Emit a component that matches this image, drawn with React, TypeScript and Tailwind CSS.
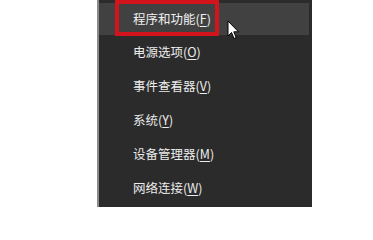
import React from 'react';

const items = [
  { label: '程序和功能', key: 'F' },
  { label: '电源选项', key: 'O' },
  { label: '事件查看器', key: 'V' },
  { label: '系统', key: 'Y' },
  { label: '设备管理器', key: 'M' },
  { label: '网络连接', key: 'W' },
];

export default function App() {
  return (
    <div
      className="relative flex w-[373px] h-[207px] overflow-hidden bg-white"
      style={{ fontFamily: '"Microsoft YaHei", "Noto Sans CJK SC", "Noto Sans", sans-serif' }}
    >
      <div className="w-[97px] shrink-0" />
      <div className="relative w-[215px] shrink-0 bg-[#2b2b2b] border-l-2 border-[#8a8a8a] pt-[3px]">
        {items.map((item, i) => (
          <div
            key={item.key}
            className={
              i === 0
                ? 'flex items-center h-8 mr-[3px] pl-[34px] bg-[#414141] text-[12.5px] text-[#f0f0f0]'
                : 'flex items-center h-[34px] pl-[34px] text-[12.5px] text-[#ececec]'
            }
          >
            {item.label}(<span className="underline underline-offset-2">{item.key}</span>)
          </div>
        ))}
        {/* red highlight annotation */}
        <div className="absolute left-[16px] top-0 w-[104px] h-[36px] border-4 border-[#d2151c]" />
      </div>
      <div className="flex-1" />
      {/* mouse pointer */}
      <svg className="absolute left-[227px] top-[20px]" width="13" height="21" viewBox="0 0 13 21">
        <path
          d="M1 1 L1 16 L4.5 12.5 L7 18.5 L9.2 17.6 L6.8 11.8 L11.5 11.8 Z"
          fill="#ffffff"
          stroke="#000000"
          strokeWidth="1"
          strokeLinejoin="round"
        />
      </svg>
    </div>
  );
}
